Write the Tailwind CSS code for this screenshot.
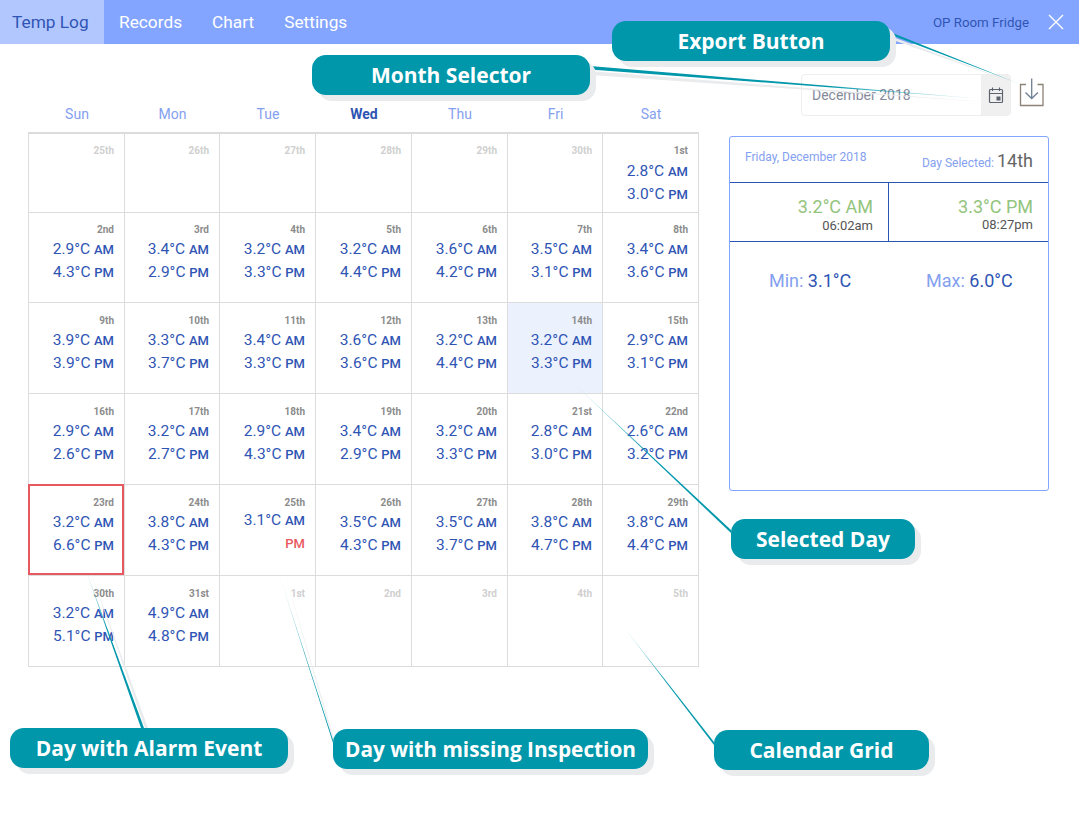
<!DOCTYPE html>
<html lang="en">
<head>
    <meta charset="UTF-8">
    <title>Temp Log</title>
    <script src="https://cdn.jsdelivr.net/npm/@tailwindcss/browser@4"></script>
</head>
<body class="bg-white">
    <div class="relative w-[1079px] h-[818px] overflow-hidden bg-white font-['Roboto',sans-serif]">
        <!-- Top nav -->
        <nav class="flex items-center h-11 pt-px bg-[#84a5ff] text-[17.3px]">
            <a class="absolute left-0 top-0 flex items-center h-11 w-[104px] pl-3 pt-px bg-[#b3c7ff] text-[#2f55b4]">Temp Log</a>
            <a class="ml-[119px] text-white">Records</a>
            <a class="ml-[30px] text-white">Chart</a>
            <a class="ml-[30px] text-white">Settings</a>
            <span class="ml-auto mr-[50px] text-[13.3px] text-[#2f55b4]">OP Room Fridge</span>
            <svg class="absolute left-[1048px] top-[14px]" width="16" height="16" viewBox="0 0 16 16" fill="none" stroke="#fff" stroke-width="1.4"><path d="M1 1 15 15M15 1 1 15"/></svg>
        </nav>

        <div class="flex pl-7 pt-[30px]">
            <!-- Calendar -->
            <div class="w-[671px]">
                <div id="days" class="grid grid-cols-[96px_95px_96px_96px_96px_95px_96px] h-[58px] pt-[30px] pl-px text-sm text-center text-[#84a0f0]"></div>
                <div id="grid" class="grid grid-cols-[96px_95px_96px_96px_96px_95px_96px] grid-rows-[79px_90px_91px_91px_91px_91px] w-[671px] border-l border-t-2 border-[#dcdcdc]"></div>
            </div>

            <!-- Right column -->
            <div class="flex flex-col w-[350px] ml-[29px]">
                <div class="flex items-start h-[62px]">
                    <div class="flex ml-[73px] w-[210px] h-[42px] border border-[#eeeeee] rounded-sm text-sm text-[#85899a]">
                        <div class="flex-1 flex items-center pl-[10px]">December 2018</div>
                        <div class="flex items-center justify-center w-[29px] bg-[#f0f0f0]">
                            <svg width="16" height="17" viewBox="0 0 16 17" fill="none" stroke="#5d6470" stroke-width="1.2"><rect x="1.5" y="2.5" width="13" height="13" rx="1"/><path d="M1.5 6.5h13M4.5 .5v3.500M11.500 .5v3.500"/><rect x="8.500" y="9.500" width="4" height="4" fill="#5d6470" stroke="none"/></svg>
                        </div>
                    </div>
                    <svg class="ml-[8px] mt-[4px]" width="26" height="30" viewBox="0 0 26 30" fill="none"><path d="M7 6.500H1.500V27.500H24V6.500H18.500" stroke="#8c8276" stroke-width="1.300"/><path d="M12.700 .500V20M6.500 14.500l6.200 6 6.200-6" stroke="#6f7f93" stroke-width="1.300"/></svg>
                </div>

                <div class="flex flex-col w-[320px] h-[355px] ml-[1px] border border-[#84a5ff] rounded-[3px]">
                    <div class="flex justify-between h-[46px] pl-[15px] pr-[15px] border-b border-[#2a55b5] text-[#84a0f0]">
                        <span class="mt-[12px] text-xs">Friday, December 2018</span>
                        <span class="mt-[10px] text-xs">Day Selected: <span class="text-lg text-[#666666]">14th</span></span>
                    </div>
                    <div class="flex h-[59px] border-b border-[#2a55b5] text-right">
                        <div class="w-[159px] pr-[15px] pt-[13px] border-r border-[#2a55b5]">
                            <div class="text-lg leading-[22px] text-[#93c47d]">3.2°C AM</div>
                            <div class="text-[13px] leading-[15px] text-[#555555]">06:02am</div>
                        </div>
                        <div class="flex-1 pr-[15px] pt-[13px]">
                            <div class="text-lg leading-[22px] text-[#93c47d]">3.3°C PM</div>
                            <div class="text-[13px] leading-[13px] text-[#555555]">08:27pm</div>
                        </div>
                    </div>
                    <div class="flex pt-[28px] text-lg leading-[22px] text-[#84a0f0]">
                        <div class="w-[159px] pl-[39px]">Min: <span class="text-[#2f55b4]">3.1°C</span></div>
                        <div class="pl-[37px]">Max: <span class="text-[#2f55b4]">6.0°C</span></div>
                    </div>
                </div>
            </div>
        </div>

        <!-- Annotation leader lines -->
        <svg class="absolute left-0 top-0 pointer-events-none" width="1079" height="818">
            <defs>
                <linearGradient id="exp" gradientUnits="userSpaceOnUse" x1="890" y1="33" x2="1020" y2="84"><stop offset="0" stop-color="#0097ab"/><stop offset=".7" stop-color="#0097ab"/><stop offset="1" stop-color="#0097ab" stop-opacity=".4"/></linearGradient>
                <linearGradient id="mon" gradientUnits="userSpaceOnUse" x1="590" y1="67" x2="985" y2="99"><stop offset="0" stop-color="#0097ab"/><stop offset=".6" stop-color="#0097ab"/><stop offset="1" stop-color="#0097ab" stop-opacity=".1"/></linearGradient>
                <linearGradient id="sel" gradientUnits="userSpaceOnUse" x1="731" y1="532" x2="568" y2="378"><stop offset="0" stop-color="#0097ab"/><stop offset=".5" stop-color="#0097ab"/><stop offset="1" stop-color="#0097ab" stop-opacity="0"/></linearGradient>
                <linearGradient id="alm" gradientUnits="userSpaceOnUse" x1="143" y1="728" x2="85" y2="565"><stop offset="0" stop-color="#0097ab"/><stop offset=".6" stop-color="#0097ab"/><stop offset="1" stop-color="#0097ab" stop-opacity="0"/></linearGradient>
                <linearGradient id="mis" gradientUnits="userSpaceOnUse" x1="333" y1="742" x2="277" y2="568"><stop offset="0" stop-color="#0097ab"/><stop offset=".5" stop-color="#0097ab"/><stop offset="1" stop-color="#0097ab" stop-opacity="0"/></linearGradient>
                <linearGradient id="cal" gradientUnits="userSpaceOnUse" x1="714" y1="743" x2="620" y2="622"><stop offset="0" stop-color="#0097ab"/><stop offset=".5" stop-color="#0097ab"/><stop offset="1" stop-color="#0097ab" stop-opacity="0"/></linearGradient>
            </defs>
            <polygon points="890,36 1020,85 890,39" fill="#e9ebed"/>
            <polygon points="590,71 985,102 590,75" fill="#e9ebed"/>
            <polygon points="145,728 90,570 148,728" fill="#e9ebed"/>
            <polygon points="336,745 284,570 335,748" fill="#eef0f1"/>
            <polygon points="890,32 1020,84 890,34.500" fill="url(#exp)"/>
            <polygon points="590,66 985,99 590,69.500" fill="url(#mon)"/>
            <polygon points="731,530 568,378 731,533" fill="url(#sel)"/>
            <polygon points="141,728 84,565 144,728" fill="url(#alm)"/>
            <polygon points="333,740 277,568 333,743" fill="url(#mis)"/>
            <polygon points="714,742 619,621 714,745" fill="url(#cal)"/>
        </svg>

        <!-- Annotation labels -->
        <div class="absolute left-[612px] top-[21px] w-[278px] h-10 pt-[2px] flex items-center justify-center rounded-[14px] bg-[#0097ab] shadow-[6px_6px_0_#e9ebed] text-white text-[21px] font-bold font-['Open_Sans',sans-serif]">Export Button</div>
        <div class="absolute left-[312px] top-[55px] w-[278px] h-10 pt-[2px] flex items-center justify-center rounded-[14px] bg-[#0097ab] shadow-[6px_6px_0_#e9ebed] text-white text-[21px] font-bold font-['Open_Sans',sans-serif]">Month Selector</div>
        <div class="absolute left-[731px] top-[519px] w-[184px] h-10 pt-[2px] flex items-center justify-center rounded-[14px] bg-[#0097ab] shadow-[6px_6px_0_#e9ebed] text-white text-[21px] font-bold font-['Open_Sans',sans-serif]">Selected Day</div>
        <div class="absolute left-[10px] top-[728px] w-[278px] h-10 pt-[2px] flex items-center justify-center rounded-[14px] bg-[#0097ab] shadow-[6px_6px_0_#e9ebed] text-white text-[21px] font-bold font-['Open_Sans',sans-serif]">Day with Alarm Event</div>
        <div class="absolute left-[333px] top-[729px] w-[315px] h-10 pt-[2px] flex items-center justify-center rounded-[14px] bg-[#0097ab] shadow-[6px_6px_0_#e9ebed] text-white text-[20.8px] font-bold font-['Open_Sans',sans-serif]">Day with missing Inspection</div>
        <div class="absolute left-[714px] top-[730px] w-[215px] h-10 pt-[2px] flex items-center justify-center rounded-[14px] bg-[#0097ab] shadow-[6px_6px_0_#e9ebed] text-white text-[21px] font-bold font-['Open_Sans',sans-serif]">Calendar Grid</div>
    </div>

    <script>
        const dayNames = ['Sun', 'Mon', 'Tue', 'Wed', 'Thu', 'Fri', 'Sat'];
        document.getElementById('days').innerHTML = dayNames.map(d =>
            d === 'Wed' ? `<div class="font-bold text-[#2f55b4]">${d}</div>` : `<div>${d}</div>`
        ).join('');

        // [date label, AM, PM, state]
        const cells = [
            ['25th'], ['26th'], ['27th'], ['28th'], ['29th'], ['30th'], ['1st', '2.8', '3.0', 'first'],
            ['2nd', '2.9', '4.3'], ['3rd', '3.4', '2.9'], ['4th', '3.2', '3.3'], ['5th', '3.2', '4.4'], ['6th', '3.6', '4.2'], ['7th', '3.5', '3.1'], ['8th', '3.4', '3.6'],
            ['9th', '3.9', '3.9'], ['10th', '3.3', '3.7'], ['11th', '3.4', '3.3'], ['12th', '3.6', '3.6'], ['13th', '3.2', '4.4'], ['14th', '3.2', '3.3', 'selected'], ['15th', '2.9', '3.1'],
            ['16th', '2.9', '2.6'], ['17th', '3.2', '2.7'], ['18th', '2.9', '4.3'], ['19th', '3.4', '2.9'], ['20th', '3.2', '3.3'], ['21st', '2.8', '3.0'], ['22nd', '2.6', '3.2'],
            ['23rd', '3.2', '6.6', 'alarm'], ['24th', '3.8', '4.3'], ['25th', '3.1', null, 'missing'], ['26th', '3.5', '4.3'], ['27th', '3.5', '3.7'], ['28th', '3.8', '4.7'], ['29th', '3.8', '4.4'],
            ['30th', '3.2', '5.1'], ['31st', '4.9', '4.8'], ['1st'], ['2nd'], ['3rd'], ['4th'], ['5th']
        ];

        const row = (temp, unit) => `
            <div class="h-[23px] leading-[23px] text-[15.5px] text-[#2f55b4]">${temp ? temp + '°C ' : ''}<span class="text-[13px] font-medium ${temp ? '' : 'text-[#e8595f]'}">${unit}</span></div>`;

        document.getElementById('grid').innerHTML = cells.map(([label, am, pm, state], i) => {
            const box = state === 'selected' ? 'bg-[#ebf1fd]' : '';
            const alarm = state === 'alarm' ? '<div class="absolute -left-px -top-px right-0 bottom-0 border-2 border-[#e8595f]"></div>' : '';
            const labelColor = am ? 'text-[#8c8c8c]' : 'text-[#cfcfcf]';
            const shift = state === 'first' ? 'mt-[2px]' : state === 'missing' ? '-mt-px' : 'mt-px';
            // rows from the third down sit a pixel lower in their cells
            const top = i >= 14 ? 'pt-[11px]' : 'pt-[10px]';
            return `<div class="relative pr-[10px] ${top} text-right border-r border-b border-[#dcdcdc] ${box}">
                ${alarm}
                <div class="h-[14px] leading-[14px] text-[10px] font-bold ${labelColor}">${label}</div>
                ${am ? `<div class="${shift}">${row(am, 'AM')}${row(pm, 'PM')}</div>` : ''}
            </div>`;
        }).join('');
    </script>
</body>
</html>
